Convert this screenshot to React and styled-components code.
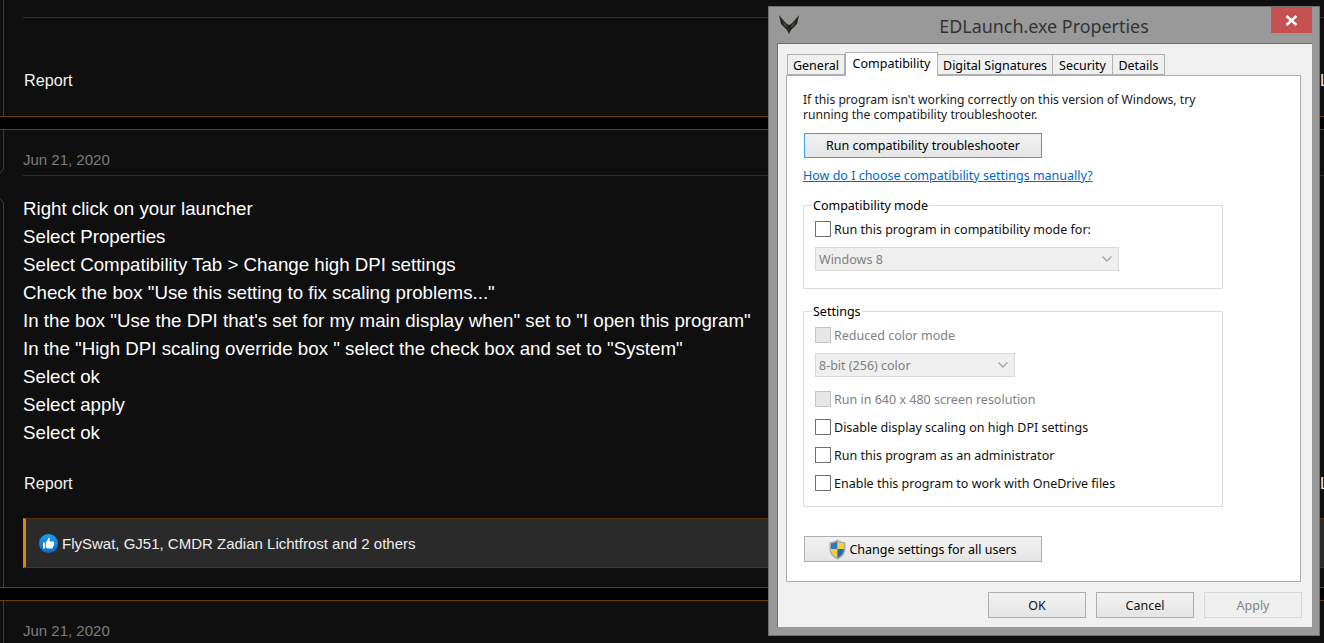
import styled, {createGlobalStyle} from "styled-components";

const steps = [
    "Right click on your launcher",
    "Select Properties",
    "Select Compatibility Tab > Change high DPI settings",
    "Check the box \"Use this setting to fix scaling problems...\"",
    "In the box \"Use the DPI that's set for my main display when\" set to \"I open this program\"",
    "In the \"High DPI scaling override box \" select the check box and set to \"System\"",
    "Select ok",
    "Select apply",
    "Select ok",
];

const tabs = [
    {name: "General", width: 58},
    {name: "Compatibility", width: 93, active: true},
    {name: "Digital Signatures", width: 116},
    {name: "Security", width: 61},
    {name: "Details", width: 53},
];

const GlobalStyle = createGlobalStyle`
    html, body {
        margin: 0;
        height: 100%;
        overflow: hidden;
        background: #000;
    }
`;

const BatLogo = () => (
    <LogoSvg viewBox="0 0 22 20">
        <path d="M1 1 L6 7 L9 10 L11 11 L13 10 L16 7 L21 1 L19 10 L13 16 L11 20 L9 16 L3 10Z" fill="#23251f"/>
        <path d="M5 7 L8 11 L9.5 13 L8 13 L6 11Z M17 7 L14 11 L12.5 13 L14 13 L16 11Z" fill="#4d5240"/>
    </LogoSvg>
);

const Shield = () => (
    <ShieldSvg viewBox="0 0 17 21">
        <path d="M8.5 0.5 C6 2.5 3 3.2 0.5 3.2 L0.5 10 C0.5 15 4 18.5 8.5 20.5 C13 18.5 16.5 15 16.5 10 L16.5 3.2 C14 3.2 11 2.5 8.5 0.5Z" fill="#a9adb0"/>
        <path d="M8.5 2 C6.5 3.5 4 4.2 2 4.4 L2 10 L8.5 10Z" fill="#2f78c4"/>
        <path d="M8.5 2 C10.5 3.5 13 4.2 15 4.4 L15 10 L8.5 10Z" fill="#f6cf3f"/>
        <path d="M2 10 C2 14 5 17 8.5 19 L8.5 10Z" fill="#f6cf3f"/>
        <path d="M15 10 C15 14 12 17 8.5 19 L8.5 10Z" fill="#2468b4"/>
    </ShieldSvg>
);

const LikeBadge = () => (
    <LikeSvg viewBox="0 0 19 19">
        <defs>
            <linearGradient id="likeBlue" x1="0" y1="0" x2="0" y2="1">
                <stop offset="0" stopColor="#18a0f0"/>
                <stop offset="1" stopColor="#0a6cc8"/>
            </linearGradient>
        </defs>
        <circle cx="9.5" cy="9.5" r="9.5" fill="url(#likeBlue)"/>
        <path d="M4 8.5 H6.2 V14.5 H4Z M7 8.5 L9.6 4 C10.6 3.6 11.3 4.4 11 5.6 L10.5 7.6 H14.2 C15.2 7.6 15.5 8.6 15 9.3 C15.4 10 15.2 10.8 14.6 11.1 C14.9 11.8 14.6 12.5 14 12.8 C14.1 13.6 13.6 14.5 12.8 14.5 H8.6 L7 13.8Z" fill="#fff"/>
    </LikeSvg>
);

const Chevron = () => (
    <ChevronSvg viewBox="0 0 10 6">
        <path d="M0.5 0.5 L5 5 L9.5 0.5" fill="none" stroke="#a6a6a6" strokeWidth="1.4"/>
    </ChevronSvg>
);

const PropertiesDialog = () => (
    <Dialog>
        <TitleBar>
            <BatLogo/>
            <Title>EDLaunch.exe Properties</Title>
            <CloseButton>
                <svg width="13" height="11" viewBox="0 0 13 11">
                    <path d="M1.5 1 L11.5 10 M11.5 1 L1.5 10" stroke="#fff" strokeWidth="2.4"/>
                </svg>
            </CloseButton>
        </TitleBar>
        <Client>
            <TabRow>
                {tabs.map(tab => (
                    <Tab key={tab.name} $active={tab.active} $width={tab.width}>{tab.name}</Tab>
                ))}
            </TabRow>
            <Pane>
                <Intro>
                    If this program isn't working correctly on this version of Windows, try<br/>
                    running the compatibility troubleshooter.
                </Intro>
                <WideButton $focused>Run compatibility troubleshooter</WideButton>
                <HelpLink>How do I choose compatibility settings manually?</HelpLink>
                <Group $top={13} $bottom={17}>
                    <GroupTitle>Compatibility mode</GroupTitle>
                    <CheckRow><Box/>Run this program in compatibility mode for:</CheckRow>
                    <FakeSelect $width={304}>Windows 8<Chevron/></FakeSelect>
                </Group>
                <Group $top={14} $bottom={15}>
                    <GroupTitle>Settings</GroupTitle>
                    <CheckRow $disabled><Box $disabled/>Reduced color mode</CheckRow>
                    <FakeSelect $width={200}>8-bit (256) color<Chevron/></FakeSelect>
                    <CheckRow $disabled $gap={14}><Box $disabled/>Run in 640 x 480 screen resolution</CheckRow>
                    <CheckRow $gap={12}><Box/>Disable display scaling on high DPI settings</CheckRow>
                    <CheckRow $gap={12}><Box/>Run this program as an administrator</CheckRow>
                    <CheckRow $gap={12}><Box/>Enable this program to work with OneDrive files</CheckRow>
                </Group>
                <WideButton $top={29}><Shield/>Change settings for all users</WideButton>
            </Pane>
            <Footer>
                <FooterButton>OK</FooterButton>
                <FooterButton>Cancel</FooterButton>
                <FooterButton $disabled>Apply</FooterButton>
            </Footer>
        </Client>
    </Dialog>
);

const App = () => {
    return (
        <>
            <GlobalStyle/>
            <Page>
                <Post $first>
                    <PostMain>
                        <PostHeader $first/>
                        <Actions $top={52} $bottom={26}>
                            <ActionLink>Report</ActionLink>
                            <ActionLink>Like</ActionLink>
                        </Actions>
                    </PostMain>
                </Post>
                <Post>
                    <Notch viewBox="0 0 4 37" preserveAspectRatio="none">
                        <rect width="4" height="37" fill="#0f0f0f"/>
                        <path d="M3.5 0 V1 L0 5 M0 31 L3.5 35 V37" fill="none" stroke="#5a3512" strokeWidth="1"/>
                    </Notch>
                    <PostMain>
                        <PostHeader><PostDate>Jun 21, 2020</PostDate></PostHeader>
                        <PostBody>
                            {steps.map((step, i) => <div key={i}>{step}</div>)}
                        </PostBody>
                        <Actions $top={26} $bottom={25}>
                            <ActionLink>Report</ActionLink>
                            <ActionLink>Like</ActionLink>
                        </Actions>
                        <LikesBar>
                            <LikeBadge/>
                            FlySwat, GJ51, CMDR Zadian Lichtfrost and 2 others
                        </LikesBar>
                    </PostMain>
                </Post>
                <Post>
                    <PostMain>
                        <PostHeader><PostDate>Jun 21, 2020</PostDate></PostHeader>
                    </PostMain>
                </Post>
            </Page>
            <PropertiesDialog/>
        </>
    );
}

const Page = styled.div`
    display: flex;
    flex-direction: column;
    gap: 12px;
    height: 643px;
    overflow: hidden;
    background: #000;
    color: #fff;
    font-family: "Liberation Sans", Arial, sans-serif;
`;

const Post = styled.article`
    position: relative;
    flex-shrink: 0;
    padding-left: 3px;
    background: #0f0f0f;
    border-top: ${props => props.$first ? "none" : "1px solid #703c08"};
    border-bottom: 1px solid #703c08;
`;

const Notch = styled.svg`
    position: absolute;
    left: 0;
    top: 38px;
    width: 4px;
    height: 37px;
`;

const PostMain = styled.div`
    display: flow-root;
    border-left: 1px solid #5a3512;
    padding-left: 19px;
`;

const PostHeader = styled.header`
    box-sizing: border-box;
    height: ${props => props.$first ? "18px" : "46px"};
    padding-top: ${props => props.$first ? "0" : "20px"};
    border-bottom: 1px solid #4a2a0c;
`;

const PostDate = styled.div`
    font-size: 15px;
    line-height: 20px;
    color: #7d7d7d;
`;

const PostBody = styled.div`
    padding-top: 19px;
    font-size: 18.72px;
    line-height: 28px;
    color: #fff;
`;

const Actions = styled.div`
    display: grid;
    grid-template-columns: 1fr 4px;
    margin-top: ${props => props.$top}px;
    margin-bottom: ${props => props.$bottom}px;
    padding-left: 1px;
`;

const ActionLink = styled.span`
    font-size: 16.2px;
    line-height: 20px;
    color: #f2f2f2;
    white-space: nowrap;
`;

const LikesBar = styled.div`
    box-sizing: border-box;
    display: flex;
    align-items: center;
    gap: 4px;
    height: 50px;
    margin-bottom: 19px;
    padding-left: 13px;
    background: #2a2a2a;
    border-top: 1px solid #5a3010;
    border-bottom: 1px solid #5a3010;
    border-left: 3px solid #e67e0e;
    font-size: 15px;
    color: #eee;
`;

const LikeSvg = styled.svg`
    width: 19px;
    height: 19px;
`;

const Dialog = styled.div`
    position: absolute;
    left: 768px;
    top: 6px;
    box-sizing: border-box;
    width: 552px;
    height: 630px;
    display: flex;
    flex-direction: column;
    background: #999;
    border: 1px solid #6e6e6e;
    color: #000;
    font-family: "Noto Sans", sans-serif;
    font-size: 12.5px;
`;

const TitleBar = styled.div`
    display: grid;
    grid-template-columns: 1fr auto 1fr;
    height: 36px;
    flex-shrink: 0;
`;

const LogoSvg = styled.svg`
    width: 22px;
    height: 20px;
    margin: 7px 0 0 9px;
`;

const ShieldSvg = styled.svg`
    width: 17px;
    height: 21px;
    margin-right: 3px;
`;

const Title = styled.div`
    font-size: 17.9px;
    line-height: 38px;
    color: #333;
`;

const CloseButton = styled.div`
    justify-self: end;
    display: flex;
    align-items: center;
    justify-content: center;
    width: 41px;
    height: 26px;
    margin-right: 7px;
    background: #c75050;
`;

const Client = styled.div`
    flex: 1;
    display: flex;
    flex-direction: column;
    margin: 0 7px 8px 8px;
    padding: 8px 11px 0 8px;
    background: #f0f0f0;
    border: 1px solid #6e6e6e;
    border-bottom: none;
    border-right: none;
`;

const TabRow = styled.div`
    display: flex;
    align-items: flex-end;
    height: 23px;
    padding-left: 1px;
`;

const Tab = styled.div`
    position: relative;
    z-index: ${props => props.$active ? 2 : 1};
    box-sizing: border-box;
    width: ${props => props.$width}px;
    height: ${props => props.$active ? "24px" : "21px"};
    margin-bottom: ${props => props.$active ? "-1px" : "0"};
    margin-left: ${props => props.$active ? "0" : "-1px"};
    background: ${props => props.$active ? "#fff" : "#f0f0f0"};
    border: 1px solid #b0b0b0;
    border-bottom: ${props => props.$active ? "none" : "1px solid #b0b0b0"};
    line-height: 21px;
    text-align: center;
    white-space: nowrap;

    &:first-child {
        margin-left: 0;
    }
`;

const Pane = styled.div`
    flex-shrink: 0;
    box-sizing: border-box;
    height: 507px;
    padding: 16px 0 0 16px;
    background: #fff;
    border: 1px solid #adadad;
`;

const Intro = styled.div`
    font-size: 12.13px;
    line-height: 15px;
    color: #1a1a1a;
`;

const WideButton = styled.div`
    box-sizing: border-box;
    display: flex;
    align-items: center;
    justify-content: center;
    width: 238px;
    height: ${props => props.$focused ? "25px" : "26px"};
    margin: ${props => props.$top || 11}px 0 0 1px;
    background: linear-gradient(#f2f2f2, #e5e5e5);
    border: 1px solid ${props => props.$focused ? "#3c9cf0" : "#adadad"};
`;

const HelpLink = styled.a`
    display: block;
    margin-top: 10px;
    line-height: 16px;
    color: #0066cc;
    text-decoration: underline;
`;

const Group = styled.fieldset`
    box-sizing: border-box;
    width: 420px;
    margin: ${props => props.$top}px 0 0 0;
    padding: 8px 0 ${props => props.$bottom}px 11px;
    border: 1px solid #dcdcdc;
    min-inline-size: 0;
`;

const GroupTitle = styled.legend`
    margin-left: -3px;
    padding: 2px 1px 0;
    line-height: 14px;
`;

const CheckRow = styled.div`
    display: flex;
    align-items: center;
    gap: 3px;
    height: 16px;
    margin-top: ${props => props.$gap || 0}px;
    color: ${props => props.$disabled ? "#7f7f7f" : "#111"};
`;

const Box = styled.span`
    box-sizing: border-box;
    width: 16px;
    height: 16px;
    flex-shrink: 0;
    background: ${props => props.$disabled ? "#e6e6e6" : "#fff"};
    border: 1px solid ${props => props.$disabled ? "#c4c4c4" : "#707070"};
`;

const FakeSelect = styled.div`
    box-sizing: border-box;
    display: flex;
    align-items: center;
    justify-content: space-between;
    width: ${props => props.$width}px;
    height: 24px;
    margin-top: 10px;
    padding: 0 6px 0 3px;
    background: #efefef;
    border: 1px solid #d9d9d9;
    color: #7f7f7f;
`;

const ChevronSvg = styled.svg`
    width: 10px;
    height: 6px;
`;

const Footer = styled.div`
    display: flex;
    justify-content: flex-end;
    gap: 10px;
    margin: 10px -1px 0 0;
`;

const FooterButton = styled.div`
    box-sizing: border-box;
    display: flex;
    align-items: center;
    justify-content: center;
    width: 98px;
    height: 26px;
    background: ${props => props.$disabled ? "#efefef" : "linear-gradient(#f2f2f2, #e5e5e5)"};
    border: 1px solid ${props => props.$disabled ? "#d9d9d9" : "#adadad"};
    color: ${props => props.$disabled ? "#838383" : "#111"};
`;

export default App;
